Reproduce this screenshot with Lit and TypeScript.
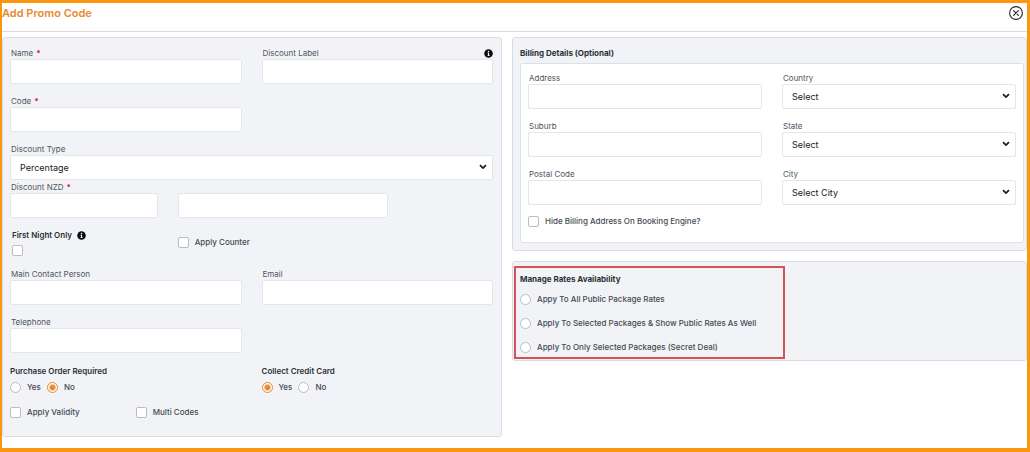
import { LitElement, html, css, svg } from "lit";
import { customElement, property } from "lit/decorators.js";

const shared = css`
  *, *::before, *::after { box-sizing: border-box; }
  .label {
    display: flex;
    align-items: center;
    height: 12px;
    padding-left: 1px;
    font-size: 8px;
    line-height: 12px;
    color: #50565c;
  }
  .control {
    width: 100%;
    min-width: 0;
    height: 25px;
    margin: 0;
    padding: 0 9px;
    border: 1px solid #e3e6ea;
    border-radius: 2px;
    background: #fff;
    font: 400 9px/12px Inter, "Liberation Sans", sans-serif;
    color: #16191c;
    outline: none;
  }
  .control:focus-visible { border-color: #f0902a; }
`;

const infoIcon = svg`<svg width="9" height="9" viewBox="0 0 16 16" aria-hidden="true">
  <circle cx="8" cy="8" r="7.6" fill="#0a0a0a"/>
  <circle cx="8" cy="4.4" r="1.3" fill="#fff"/>
  <path d="M6.2 6.8h2.9v4.4h1v1.4H6.2v-1.4h1V8.2h-1z" fill="#fff"/>
</svg>`;

@customElement("text-field")
export class TextField extends LitElement {
  @property() label = "";
  @property({ type: Boolean }) required = false;
  @property({ type: Boolean }) info = false;
  static styles = [shared, css`
    :host { display: block; min-width: 0; }
    .star { margin-left: 3px; color: #d8232f; font-weight: 700; }
    .info { display: flex; margin-left: auto; }
  `];
  render() {
    return html`<label class="label" for="box"><span>${this.label}</span>
      ${this.required ? html`<span class="star">*</span>` : ""}
      ${this.info ? html`<span class="info">${infoIcon}</span>` : ""}</label>
      <input class="control" id="box" type="text" ?required=${this.required}>`;
  }
}

@customElement("select-field")
export class SelectField extends LitElement {
  @property() label = "";
  @property() value = "";
  static styles = [shared, css`
    :host { display: block; min-width: 0; }
    .wrap { display: grid; align-items: center; }
    .control, .chevron { grid-area: 1 / 1; }
    .control { appearance: none; }
    .chevron { justify-self: end; margin: 0 6px 2px 0; pointer-events: none; }
  `];
  render() {
    return html`<label class="label" for="box">${this.label}</label>
      <div class="wrap">
        <select class="control" id="box"><option>${this.value}</option></select>
        <svg class="chevron" width="8" height="6" viewBox="0 0 8 6" aria-hidden="true">
          <path d="M1 1.2 4 4.1 7 1.2" fill="none" stroke="#16191c" stroke-width="1.7"/>
        </svg>
      </div>`;
  }
}

@customElement("app-root")
export class AppRoot extends LitElement {
  static styles = [shared, css`
    :host {
      display: block;
      font-family: Inter, "Liberation Sans", sans-serif;
      font-size: 8px;
      line-height: 12px;
      color: #454a50;
    }
    .frame {
      min-height: 100vh;
      border: 3px solid #fb9611;
      border-left-width: 2px;
      border-bottom-width: 4px;
      background: #fff;
    }
    .header {
      display: flex;
      align-items: center;
      justify-content: space-between;
      height: 29px;
      padding: 0 4px 8px 0;
      border-bottom: 1px solid #d9dde1;
    }
    .title { margin: 0; font-size: 11px; line-height: 16px; font-weight: 600; color: #e5892f; }
    .close { display: flex; padding: 0; border: 0; background: none; cursor: pointer; }
    .body {
      display: grid;
      grid-template-columns: 500fr 515fr;
      gap: 10px;
      align-items: start;
      padding-top: 5px;
    }
    .side { display: grid; gap: 10px; }
    .panel { border: 1px solid #d9dde3; border-radius: 3px; background: #f1f3f7; }
    .main { padding: 9px 8px 18px 7px; }
    .two { display: grid; grid-template-columns: 1fr 1fr; gap: 11px 20px; }
    .type { margin-top: 11px; }
    .three { display: grid; grid-template-columns: 148fr 211fr 85fr; column-gap: 20px; align-items: center; }
    .discount { margin-top: 1px; align-items: end; }
    .night { align-items: start; margin: 11px 0 12px; }
    .counter { padding-top: 7px; }
    .stack { display: grid; gap: 4px; padding-left: 2px; justify-items: start; }
    .heading {
      display: flex;
      align-items: center;
      gap: 5px;
      margin: 0;
      padding: 0;
      font-size: 8px;
      line-height: 12px;
      font-weight: 600;
      color: #2b3036;
    }
    .strong { font-weight: 700; }
    .group { min-width: 0; margin: 0; padding: 0; border: 0; }
    .questions { margin-top: 12px; }
    .row { display: flex; align-items: center; gap: 6px; margin-top: 4px; }
    .choice { display: flex; align-items: center; gap: 6px; font-weight: 500; }
    .tick {
      appearance: none;
      flex: none;
      width: 11px;
      height: 11px;
      margin: 0;
      border: 1px solid #b9bdc1;
      border-radius: 2px;
      background: #fff;
    }
    .round { border-radius: 50%; }
    .tick:checked { border-color: #e5892f; background: #e5892f; }
    .round:checked { background: radial-gradient(circle, #e5892f 2px, #fff 4px); }
    .extras { display: grid; grid-template-columns: 126fr 358fr; margin-top: 13px; }
    .billing { padding: 9px 2px 7px 7px; }
    .card {
      margin-top: 4px;
      padding: 8px 7px 15px;
      border: 1px solid #dce1e6;
      border-radius: 3px;
      background: #fff;
    }
    .hide { margin-top: 10px; }
    .rates { padding: 4px 1px 1px; }
    .marked { width: max-content; max-width: 100%; padding: 5px 27px 4px 4px; border: 2px solid #d8515a; }
    .options { display: grid; gap: 12px; margin-top: 8px; }
  `];

  choice(type: string, text: string, name = "", checked = false) {
    return html`<label class="choice"><input class="tick ${type === "radio" ? "round" : ""}"
      type=${type} name=${name} .checked=${checked}>${text}</label>`;
  }

  render() {
    return html`<main class="frame">
      <header class="header">
        <h1 class="title">Add Promo Code</h1>
        <button class="close" type="button" aria-label="Close">
          <svg width="14" height="14" viewBox="0 0 14 14" fill="none" stroke="#2b2b2b" stroke-linecap="round">
            <circle cx="7" cy="7" r="6.4" stroke-width="1.1"/>
            <path d="M4.6 4.6 9.4 9.4M9.4 4.6 4.6 9.4" stroke-width="1.2"/>
          </svg>
        </button>
      </header>
      <form class="body">
        <section class="panel main">
          <div class="two">
            <text-field label="Name" required></text-field>
            <text-field label="Discount Label" info></text-field>
            <text-field label="Code" required></text-field>
          </div>
          <select-field class="type" label="Discount Type" value="Percentage"></select-field>
          <div class="three discount">
            <text-field label="Discount NZD" required></text-field>
            <input class="control" type="text" aria-label="Discount value">
          </div>
          <div class="three night">
            <div class="stack">
              <label class="heading" for="first-night">First Night Only ${infoIcon}</label>
              <input class="tick" id="first-night" type="checkbox">
            </div>
            <div class="counter">${this.choice("checkbox", "Apply Counter")}</div>
          </div>
          <div class="two">
            <text-field label="Main Contact Person"></text-field>
            <text-field label="Email"></text-field>
            <text-field label="Telephone"></text-field>
          </div>
          <div class="two questions">
            <fieldset class="group">
              <legend class="heading">Purchase Order Required</legend>
              <div class="row">${this.choice("radio", "Yes", "order")}${this.choice("radio", "No", "order", true)}</div>
            </fieldset>
            <fieldset class="group">
              <legend class="heading">Collect Credit Card</legend>
              <div class="row">${this.choice("radio", "Yes", "card", true)}${this.choice("radio", "No", "card")}</div>
            </fieldset>
          </div>
          <div class="extras">
            ${this.choice("checkbox", "Apply Validity")}
            ${this.choice("checkbox", "Multi Codes")}
          </div>
        </section>
        <div class="side">
          <section class="panel billing">
            <h2 class="heading strong">Billing Details (Optional)</h2>
            <div class="card">
              <div class="two">
                <text-field label="Address"></text-field>
                <select-field label="Country" value="Select"></select-field>
                <text-field label="Suburb"></text-field>
                <select-field label="State" value="Select"></select-field>
                <text-field label="Postal Code"></text-field>
                <select-field label="City" value="Select City"></select-field>
              </div>
              <div class="hide">${this.choice("checkbox", "Hide Billing Address On Booking Engine?")}</div>
            </div>
          </section>
          <section class="panel rates">
            <div class="marked">
              <fieldset class="group">
                <legend class="heading strong">Manage Rates Availability</legend>
                <div class="options">
                  ${this.choice("radio", "Appy To All Public Package Rates", "rates")}
                  ${this.choice("radio", "Apply To Selected Packages & Show Public Rates As Well", "rates")}
                  ${this.choice("radio", "Apply To Only Selected Packages (Secret Deal)", "rates")}
                </div>
              </fieldset>
            </div>
          </section>
        </div>
      </form>
    </main>`;
  }
}
